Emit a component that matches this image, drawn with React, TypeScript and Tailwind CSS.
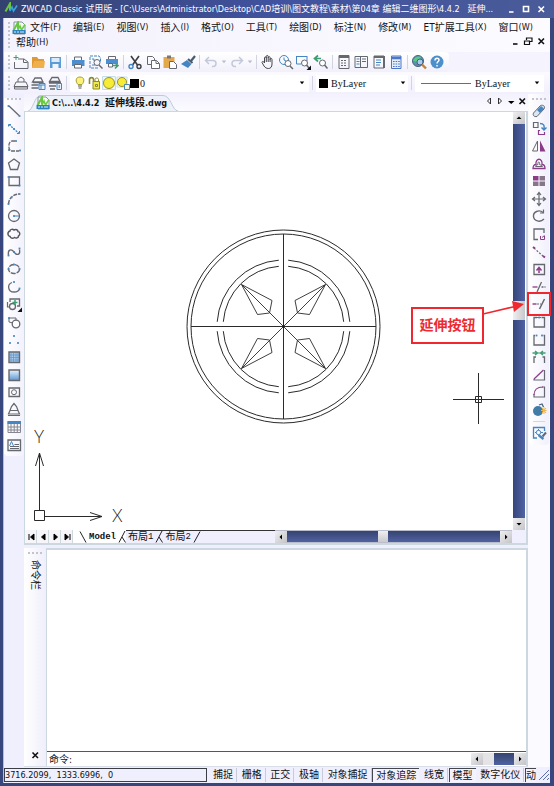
import type { ReactNode } from "react";

const G = "#66686f";
const B = "#4585c2";
const P = "#8c3b88";
const N = "#3f9d73";

const glyphs: Record<string, ReactNode> = {
  new: (<><path d="M5 5h6l4 3v6.500H1.500V8" stroke={G} /><path d="M10.500 5v3.500h4" stroke={G} /><path d="M3 1v5M.5 3.500h5" stroke={N} /></>),
  open: (<><path d="M2 3h5l1.500 2H14v9H2z" fill="#e09a35" stroke="none" /><path d="M4 7h11l-1 7H2z" fill="#f0b049" stroke="none" /></>),
  save: (<><path d="M3 3h11v11H3z" fill="#5d9bd8" stroke="none" /><path d="M4.500 4h8v4h-8z" fill="#dcebf8" stroke="none" /><path d="M5.500 10h6v4h-6z" fill="#eef5fc" stroke="none" /></>),
  print: (<><path d="M4.500 6V3h7v3" stroke={G} /><path d="M2 6h12.500v6H2z" fill="#4c8ed0" stroke="none" /><path d="M4.500 10.500h7v3.500h-7z" fill="#fff" stroke={G} /></>),
  preview: (<><path d="M11 14H3V2h9l1.500 2v4" stroke={B} strokeDasharray="3 1" /><path d="M5 5h2v2M5 11h3" stroke={B} /><circle cx="10" cy="8.500" r="3" stroke={G} /><path d="M12 11l3.500 3.500" stroke={G} strokeWidth="1.500" /></>),
  publish: (<><path d="M4.500 5V2.500h7V5" stroke={G} /><path d="M2 5h12v5H2z" fill="#4c8ed0" stroke="none" /><path d="M4.500 9.500h4V13h-4z" fill="#fff" stroke={G} /><path d="M8 11.500h6m-3-2.500 3 2.500-3 3" stroke={N} strokeWidth="1.600" /></>),
  cut: (<><path d="M4 2l6.500 9M12 2 5.500 11" stroke="#3c3d44" strokeWidth="1.600" /><circle cx="4" cy="12.500" r="2" stroke={B} strokeWidth="1.400" /><circle cx="12" cy="12.500" r="2" stroke="#3c3d44" strokeWidth="1.400" /></>),
  copy: (<><path d="M2.500 2.500h5l2 2v6h-7z" stroke={G} /><path d="M6.500 6.500h5l3 3v5h-8z" fill="#fff" stroke={G} /><path d="M11 6.500v3h3" stroke={G} /></>),
  paste: (<><path d="M1.500 3h11v11h-11z" fill="#e4a74a" stroke="none" /><path d="M5 1.500h4v3H5z" fill="#777" stroke="none" /><path d="M7.500 7.500h4l3 3v4h-7z" fill="#fff" stroke={G} /></>),
  brush: (<><path d="M15 2l-4 5" stroke="#475a70" strokeWidth="2.200" /><path d="M8 5l4.500 4" stroke="#475a70" strokeWidth="2" /><path d="M7 6l4.500 4L8 14 1 10z" fill={B} stroke="none" /></>),
  undo: (<path d="M6 3 2.500 6.500 6 10M2.500 6.500H10c4 0 4 6 0 6H9" stroke="#c3c9da" strokeWidth="1.500" />),
  redo: (<path d="M10 3l3.500 3.500L10 10m3.500-3.500H6c-4 0-4 6 0 6h1" stroke="#c3c9da" strokeWidth="1.500" />),
  pan: (<path d="M4.500 9V4c0-1.500 1.800-1.500 1.800 0V2.500c0-1.500 1.900-1.500 1.900 0V4c0-2 1.900-2 1.900 0v1.500c0-1.500 1.900-1.500 1.900 0V10c0 3-1.500 4.500-3.500 4.500S5 13.500 4 12L2 8.500C2 7 3.500 7 4.500 9zM6.300 4v4M8.200 4v4M10.100 5v3" stroke="#45474e" />),
  zoomRt: (<><circle cx="6" cy="6" r="4.500" stroke={B} /><path d="M6 3.500V6l2 1" stroke={B} /><circle cx="10" cy="9.500" r="3" fill="#fff" stroke={G} /><path d="M12 12l3 3" stroke={G} strokeWidth="1.500" /></>),
  zoomWin: (<><path d="M1 2.500h11M1.500 2v8H6M12 2v5" stroke={B} /><circle cx="9.500" cy="9" r="3" fill="#fff" stroke={G} /><path d="M11.500 11l2.500 3" stroke={G} strokeWidth="1.500" /><path d="M16 11.500V16h-4.500z" fill="#111" stroke="none" /></>),
  zoomPrev: (<><path d="M8 4.500H2m3-3-3.500 3 3.500 3" stroke={N} strokeWidth="1.700" /><circle cx="9.500" cy="9" r="3" fill="#fff" stroke={G} /><path d="M11.500 11l3 3.500" stroke={G} strokeWidth="1.500" /></>),
  props: (<><path d="M3 1.500h10v13H3z" stroke={G} /><path d="M3 3h10" stroke={G} strokeWidth="2" /><path d="M5 6.500h6M5 9h6M5 11.500h6" stroke={G} strokeDasharray="2 1" /></>),
  center: (<><path d="M2 2.500h12.500v11H2zM7.500 2v12" stroke={G} /><path d="M3.500 5h3M3.500 7.500h3M3.500 10h3" stroke={B} /><path d="M9 5h4M9 7.500h4" stroke={G} /></>),
  palette: (<><path d="M3 2h10v12H3z" stroke={G} /><path d="M3 3h10M13 2v12" stroke={G} strokeWidth="2" /><path d="M5 6h5M5 8.500h5M5 11h4" stroke={B} /></>),
  calc: (<><path d="M3.500 2h9.500v12.500H3.500z" fill="#e5eefb" stroke="#4d76c9" /><path d="M4 4h9" stroke="#4d76c9" strokeWidth="2.500" /><path d="M5 7.500h7M5 10h7M5 12.500h7" stroke="#4d76c9" strokeDasharray="1.600 1" /></>),
  render: (<><circle cx="7" cy="7" r="5.500" fill="#4f9aa8" stroke="#49617f" /><path d="M2 7c2-5 6-5 8-4L7 8z" fill="#5fc486" stroke="none" /><path d="M5 11l5-5 1 4z" fill="#c24a8d" stroke="none" /><circle cx="9" cy="8" r="3" fill="#a9cbe5" stroke="#39648f" /><path d="M11 10.500l4 4" stroke="#c1813b" strokeWidth="2.400" /></>),
  help: (<><circle cx="8" cy="8" r="6.500" fill="#4c8fcb" stroke="none" /><path d="M6 6.500c0-3 4-2.800 4-.5C10 7.500 8 7.500 8 9.500M8 11v1.500" stroke="#fff" strokeWidth="1.500" /></>),
  layer1: (<><path d="M5 7V4l3-2 3 2v3M3 7h10l2 4.500H1z" stroke={G} /><path d="M1.500 12h13v2h-13z" stroke={G} /></>),
  layer2: (<><path d="M5 3h6l2 4H2.500zM3 7.500h10M1.500 10h7M1.500 13h7" stroke={G} strokeWidth="1.300" /><path d="M9 8.500h6v6H9z" fill="#e8f2fc" stroke={B} /><path d="M9 10h6M11 10v4" stroke={B} /></>),
  layer3: (<><path d="M5 2.500h6l2 4H2.500zM2 8h12M2 11h7M3 14h5" stroke={G} strokeWidth="1.300" /><path d="M10 8.500h4.500v6H10z" fill="#e8f2fc" stroke={B} /><path d="M12.200 10v3" stroke={B} /></>),
  bulb: (<><path d="M8 2c-5 0-4.500 5-2 7.500h4C12.500 7 13 2 8 2z" fill="#fbf27a" stroke="#a69c3a" /><path d="M6 11h4M6.500 13h3" stroke="#555" /></>),
  lock: (<><path d="M3.500 9V4.500c0-2.500 4-2.500 4 0V7" stroke="#8c8a2c" strokeWidth="1.600" /><path d="M7 6.500h6.500V14H7z" fill="#f1e94b" stroke="#8c8a2c" /><path d="M9 6V4.500c0-2 3.500-2 3.500 0V6M9.500 9.500h2v2h-2z" stroke="#8c8a2c" /></>),
  sun: (<><path d="M1.500 1.500h13v13h-13z" stroke="#c7dce5" fill="#eef7f8" /><circle cx="8" cy="8" r="5.500" fill="#f7ec35" stroke="#98912c" /></>),
  sunVp: (<><path d="M2 2h10v10H2z" stroke="#c7dce5" /><circle cx="7" cy="7" r="4.500" fill="#f7ec35" stroke="#98912c" /><path d="M9.500 9.500h5v5h-5z" stroke={B} fill="#f6f7dc" /></>),
  line: (<><path d="M3 3l10 9.500" stroke={G} strokeWidth="1.300" /><Dot x={2.500} y={3} /><Dot x={13.500} y={13} /></>),
  xline: (<><path d="M3 3.500l10 9" stroke={B} strokeDasharray="2 1" strokeWidth="1.300" /><path d="M2.500 5.500V3.500H5M13.500 10v2.500H11" stroke={B} /><Dot x={8} y={8} /></>),
  pline: (<><path d="M9 3H6C2.500 3 1.500 11 5 13h8" stroke={G} strokeDasharray="4 1" strokeWidth="1.300" /><Dot x={10} y={3} /><Dot x={3} y={12} /><Dot x={14} y={12.500} /></>),
  polygon: (<path d="M8 3l5.500 4-2 6.500h-7L2.500 7z" stroke={G} strokeWidth="1.300" />),
  rect: (<><path d="M3 4h10.500v8.500H3z" stroke={G} strokeWidth="1.300" /><Dot x={2.500} y={4} /><Dot x={13.500} y={12.500} /></>),
  arc: (<><path d="M2.500 13C3 7 7 3.500 13 3" stroke={G} strokeWidth="1.400" strokeDasharray="4 1" /><Dot x={2.500} y={13} /><Dot x={5.500} y={6.500} /><Dot x={13.500} y={3} /></>),
  circle: (<><circle cx="8" cy="8" r="5.500" stroke={G} strokeWidth="1.300" /><path d="M8 8h5" stroke={B} /><Dot x={8} y={8} /></>),
  cloud: (<path d="M4 5c0-2 3-2 4-1 2-1 4 0 4 1.500 2 0 2.500 3.500.5 4.500 0 2-2.500 2.500-4 1.500-2 1.500-4 .5-4.500-1C1.500 10 1 6 4 5z" stroke="#55575e" strokeWidth="1.500" />),
  spline: (<><path d="M2.500 11C1.500 6 5 4 8 8s6.500 3 5.500-2.500" stroke={G} strokeWidth="1.300" /><Dot x={2.500} y={11.500} /><Dot x={8} y={8} /><Dot x={13.500} y={4.500} /></>),
  ellipse: (<><ellipse cx="8" cy="8" rx="5.500" ry="4.500" stroke={G} strokeDasharray="5 1" strokeWidth="1.300" /><Dot x={8} y={3.500} /><Dot x={2.500} y={8} /><Dot x={13.500} y={8} /></>),
  earc: (<><path d="M6 3.500C1 5 1.500 13 8 13c3 0 5-1.500 5.500-3" stroke={G} strokeWidth="1.300" /><Dot x={8} y={3} /><Dot x={13.500} y={9.500} /></>),
  insert: (<><path d="M4 6V3h9.500v7H11" stroke={G} strokeWidth="1.300" /><path d="M1.500 6v5h2" stroke={G} strokeWidth="1.200" /><circle cx="6.500" cy="10.500" r="3" stroke={G} strokeWidth="1.300" /><path d="M9 4v5M6.500 6.500h5" stroke={N} strokeWidth="1.500" /><path d="M16 11.500V16h-4.500z" fill="#111" stroke="none" /></>),
  block: (<><path d="M3 4h7v4M3 4v4l4 1" stroke={G} /><circle cx="10" cy="10" r="3.800" stroke={G} strokeWidth="1.300" fill="#fff" /><Dot x={3} y={4} /></>),
  point: (<><Dot x={8} y={4} /><Dot x={4} y={11} /><Dot x={12} y={11} /></>),
  hatch: (<><path d="M3 3h10.500v10.500H3z" fill="#a9caea" stroke={G} strokeWidth="1.400" /><path d="M5 4v9M7.500 4v9M10 4v9M12 4v9M4 6h9M4 8.500h9M4 11h9" stroke="#5f92c9" strokeWidth=".7" /></>),
  gradient: (<><defs><linearGradient id="cadFill" x2="0" y2="1"><stop stopColor="#e6f2fc" /><stop offset="1" stopColor="#5c97d2" /></linearGradient></defs><path d="M3 3h10.500v10.500H3z" fill="url(#cadFill)" stroke={G} strokeWidth="1.400" /></>),
  region: (<><path d="M3 4h10.500v8.500H3z" stroke={G} strokeWidth="1.300" /><circle cx="8" cy="8.200" r="2.500" stroke={G} /></>),
  wipeout: (<path d="M8 1.500 5.500 4.500 4 8.500h8l-1.500-4zM4 8.500 2.500 12h11L12 8.500M2 13.500h12" stroke={G} strokeWidth="1.200" />),
  table: (<><path d="M2 2.500h12.500v11H2zM5 5v9M8.200 5v9M11.300 5v9M2 8h12M2 11h12" stroke="#85868f" /><path d="M1.500 2h13.500v3H1.500z" fill={B} stroke="none" /></>),
  mtext: (<><path d="M2 3h12.500v10.500H2z" stroke={G} strokeWidth="1.300" /><path d="M3.500 9l2-4.500 2 4.500" stroke={B} /><path d="M8.500 7.500h4.500M4 9.500h9M4 11.500h9" stroke={G} /></>),
  erase: (<><path d="M2.500 10l7-7.500c3-1 5 1 3.500 3.500l-7 7.500c-3 .5-4.500-1-3.500-3.500z" fill="#d9e6f3" stroke={G} /><path d="M6 7l4-4 3 2.500-4 4.500z" fill={B} stroke="none" /></>),
  copyObj: (<><path d="M2.500 1.500h4.500v5H2.500z" stroke={G} strokeWidth="1.200" /><path d="M9 2.500c4 0 4.500 2 4 6m-2.500-2L13 9l2.500-2.500" stroke={B} strokeWidth="1.500" /><path d="M9 9.500H7.500v4h6V11" stroke={P} strokeWidth="1.200" /></>),
  mirror: (<><path d="M6.500 3v10H1.500z" stroke={G} /><path d="M9 2.500V13.500h5.500z" fill={P} stroke="none" /></>),
  offset: (<><path d="M2 12.500h12c0-3-1-4-3-4 1-7-7-7-6 0-2 0-3 1.500-3 4z" stroke={P} strokeWidth="1.300" /><path d="M4.500 10.500h7C11 9 9 9 8.500 8.500c.5-3.500-2-3.500-1.500 0C5.500 9 4.500 9.500 4.500 10.500z" stroke={G} /></>),
  array: (<><path d="M2 3h5.500v4.500H2z" fill={P} stroke="none" /><path d="M8.500 3H14v4.500H8.500zM2 8.500h5.500V13H2zM8.500 8.500H14V13H8.500z" fill="#877689" stroke="none" /></>),
  move: (<path d="M8 2v12M2 8h12M6 4l2-2.500L10 4M6 12l2 2.500L10 12M4 6 1.500 8 4 10M12 6l2.500 2-2.500 2" stroke={G} strokeWidth="1.200" />),
  rotate: (<><path d="M12 4.500C8 1 2 4 2.500 8.500S9 15 13 11" stroke={G} strokeWidth="1.400" /><path d="M12.500 1.500v3.500H9" stroke={G} strokeWidth="1.200" /></>),
  scale: (<><path d="M13 7V3H3v10.500h4" stroke={G} strokeWidth="1.300" /><path d="M9.500 13.500V10M9.500 13.500h4V10M11 11.500l2.500-2" stroke={P} /></>),
  stretch: (<><path d="M3 4l10 9" stroke={G} strokeDasharray="2 1.500" strokeWidth="1.200" /><path d="M2 3l2 1.500M12 12l2 1.500" stroke={P} strokeWidth="2" /></>),
  lengthen: (<><path d="M3 13.500V3.500h10.500v10z" stroke={G} strokeWidth="1.300" /><path d="M8 12V7m-2.500 2.500L8 6.500l2.500 3" stroke={P} strokeWidth="1.500" /></>),
  trim: (<><path d="M1.500 8h5" stroke={P} strokeWidth="1.300" /><path d="M6 13l4.500-10" stroke={G} strokeWidth="1.300" /><path d="M10.500 8h4" stroke={G} strokeWidth="1.300" strokeDasharray="2 1" /></>),
  extend: (<><path d="M1.500 8h4" stroke={P} strokeWidth="1.400" /><path d="M6 8h4" stroke={G} strokeDasharray="2 1" /><path d="M8.500 13l5-10" stroke={G} strokeWidth="1.500" /></>),
  breakPt: (<><path d="M6 3.500H3V13h10.500V3.500h-3" stroke={G} strokeWidth="1.300" /><path d="M6 3.500h4" stroke={G} /><Dot x={8.200} y={3.500} /></>),
  breakObj: (<><path d="M4 3.500H3V13h10.500V3.500h-1" stroke={G} strokeWidth="1.300" /><Dot x={5.500} y={3.500} /><Dot x={11} y={3.500} /></>),
  join: (<><path d="M3 14V8h2M13.500 14V8h-2" stroke={G} strokeWidth="1.300" /><path d="M1.500 4h4m3 0h-1M9.500 4h5M4 2l2.500 2L4 6M12 2 9.500 4 12 6" stroke={N} strokeWidth="1.400" /></>),
  chamfer: (<><path d="M13.500 3v10H3v-1" stroke={G} strokeWidth="1.200" /><path d="M3 12l9.500-9" stroke={P} strokeWidth="1.200" /></>),
  fillet: (<><path d="M3 10v3h10.500V3H11" stroke={G} strokeWidth="1.200" /><path d="M3 11c0-5 3-8 9-8" stroke={P} strokeWidth="1.200" /></>),
  explode: (<><circle cx="7" cy="9" r="5" fill="#417ba8" stroke="none" /><path d="M8 3l3-1 1.500 3" stroke="#47627c" strokeWidth="1.300" /><path d="M13 5v7M10 8.500h5.500M11 6l4 5M15 6l-4 5" stroke="#efb648" /></>),
  express: (<><path d="M13.500 6V2.500H2.500V13H6" stroke={B} strokeWidth="1.300" /><path d="M7.500 4v7M4 7.500h8" stroke={B} /><circle cx="7.500" cy="7.500" r="2.200" stroke={B} fill="#fff" /><path d="M15 7.500l-3.500 4" stroke={G} strokeWidth="2" /><path d="M8 10.500l4.500 3.500" stroke={B} strokeWidth="2.400" /></>),
};

function Dot({ x, y }: { x: number; y: number }) {
  return <rect x={x - 0.9} y={y - 0.9} width="1.800" height="1.800" fill={B} stroke="none" />;
}

function Glyph({ name }: { name: string }) {
  return (
    <svg viewBox="0 0 16 16" className="block size-4 shrink-0" fill="none" aria-hidden="true">
      {glyphs[name]}
    </svg>
  );
}

function Tool({ name }: { name: string }) {
  return (
    <button type="button" aria-label={name} className="block size-4 shrink-0">
      <Glyph name={name} />
    </button>
  );
}

function Caret({ className = "text-black" }: { className?: string }) {
  return (
    <svg viewBox="0 0 6 4" className={"block h-1 w-1.5 shrink-0 " + className} aria-hidden="true">
      <path d="M.8.5h4.400L3 3.200z" fill="currentColor" />
    </svg>
  );
}

const Grip = () => <span className="mr-[3px] h-3.5 w-0.5 shrink-0 border-l-2 border-dotted border-[#c3c4d0]" />;
const GripH = () => <span className="h-0.5 w-3.5 shrink-0 border-t-2 border-dotted border-[#c3c4d0]" />;
const Sep = () => <span className="mx-[3px] h-3.5 w-px shrink-0 bg-[#d3d4e2]" />;

function Logo({ paper = false }: { paper?: boolean }) {
  return (
    <svg viewBox="0 0 14 14" className="block size-3.5 shrink-0" fill="none" aria-hidden="true">
      {paper && <path d="M2 1h8l3 3v9H2z" fill="#f4faf6" stroke="#8494a0" />}
      <path d="M1.500 9.500 6 1.500v7" stroke="#69c63e" strokeWidth="2" />
      <path d="M6 9l2-4 1.500 4L13 3.500" stroke={paper ? "#6ccb44" : "#37a4e0"} strokeWidth="1.600" />
      {paper && <path d="M.5 9h13v4H.5z" fill="#2c82c0" />}
      {paper && <path d="M2 11h2m1 0h2m1 0h4" stroke="#d9ecf8" />}
    </svg>
  );
}

type Mark = "min" | "max" | "restore" | "close";
function WinButton({ mark }: { mark: Mark }) {
  return (
    <button type="button" aria-label={mark} className="block size-2.5">
      <svg viewBox="0 0 10 10" className="block size-2.5" fill="none" stroke="currentColor" strokeWidth="1.600" aria-hidden="true">
        {mark === "min" && <path d="M3 8h4.500" />}
        {mark === "max" && <path d="M2.500 2.500h5v5h-5z" />}
        {mark === "restore" && <path d="M3.500 4V2H9v3.500H7M1.500 5h5v3.500h-5z" strokeWidth="1.200" />}
        {mark === "close" && <path d="M2.500 2.500l5.500 5.500m0-5.500L2.500 8" />}
      </svg>
    </button>
  );
}

const menus = [
  ["文件", "F"], ["编辑", "E"], ["视图", "V"], ["插入", "I"], ["格式", "O"], ["工具", "T"],
  ["绘图", "D"], ["标注", "N"], ["修改", "M"], ["ET扩展工具", "X"], ["窗口", "W"], ["帮助", "H"],
];

const drawTools = ["line", "xline", "pline", "polygon", "rect", "arc", "circle", "cloud", "spline", "ellipse", "earc", "insert", "block", "point", "hatch", "gradient", "region", "wipeout", "table", "mtext"];
const editTools = ["erase", "copyObj", "mirror", "offset", "array", "move", "rotate", "scale", "stretch", "lengthen", "trim", "extend", "breakPt", "breakObj", "join", "chamfer", "fillet", "explode"];

function Group({ items, width }: { items: string[]; width: string }) {
  return (
    <div className={"flex shrink-0 justify-between " + width}>
      {items.map((n) => <Tool key={n} name={n} />)}
    </div>
  );
}

type Dir = "up" | "down" | "left" | "right";
const arrows: Record<Dir, string> = {
  up: "M3.500 7h5L6 4.500z",
  down: "M3.500 5h5L6 7.500z",
  left: "M7 3.500v5L4.500 6z",
  right: "M5 3.500v5L7.500 6z",
};
function ScrollButton({ dir }: { dir: Dir }) {
  return (
    <button type="button" aria-label={"scroll " + dir} className="block size-3 shrink-0 bg-linear-to-br from-[#efeff1] to-[#c4c4c8]">
      <svg viewBox="0 0 12 12" className="block size-3" aria-hidden="true"><path d={arrows[dir]} /></svg>
    </button>
  );
}

function Wheel() {
  const dirs = [[1, 1], [1, -1], [-1, 1], [-1, -1]];
  return (
    <g transform="translate(283.5 326.5)">
      <circle r="96.500" />
      <circle r="92.500" />
      <path d="M0-92.500v185M-92.500 0h185" />
      {dirs.map(([x, y]) => (
        <g key={x + "," + y} transform={`scale(${x} ${y})`}>
          <path d="M4.700-66.300A66.500 66.500 0 0 1 66.300-4.700M4.700-60.200A60.300 60.300 0 0 1 60.200-4.700" />
          <path d="M0 0 42-42 11.500-26 14-13.500 26-12 42-42" strokeWidth=".9" />
        </g>
      ))}
      <circle r="1" fill="#111" />
    </g>
  );
}

function Drawing() {
  return (
    <svg viewBox="25 112 487 418" preserveAspectRatio="xMinYMin meet" className="absolute inset-0 size-full" fill="none" stroke="#2a2a2a" aria-label="drawing">
      <Wheel />
      <path d="M453 399.500h51M478.500 373v51" />
      <path d="M475.500 396.500h6v6h-6z" />
      <path d="M34.500 510.500h10v10h-10zM39.500 510v-57M35.500 466l4-13 4 13M45 516.500h57M90 512.500l12 4-12 4" />
      <g fill="#222" stroke="none" className="font-['Lato'] text-[17px] font-light">
        <text x="34" y="443">Y</text>
        <text x="112" y="522">X</text>
      </g>
    </svg>
  );
}

function SheetTab({ label, digit, active = false }: { label: string; digit?: string; active?: boolean }) {
  return (
    <button type="button" className={"flex h-3 items-center px-0.5 leading-3 " + (active ? "font-['Liberation_Mono'] text-[9px] font-bold" : "text-[10px]")}>
      {label}
      {digit && <span className="font-['Liberation_Mono'] text-[9px]">{digit}</span>}
    </button>
  );
}

function Slash({ kind }: { kind: "open" | "cross" | "end" }) {
  return (
    <svg viewBox="0 0 8 12" className="block h-3 w-2 shrink-0" fill="none" stroke="#222" aria-hidden="true">
      {kind === "open" && <path d="M1 .5 7 11.500" />}
      {kind === "cross" && <path d="M7 0 1 11.500M4 6l3.500 5.500" />}
      {kind === "end" && <path d="M7 .5 1 11.500" />}
    </svg>
  );
}

function StatusToggle({ label, on = false, tight = false }: { label: string; on?: boolean; tight?: boolean }) {
  return (
    <button
      type="button"
      aria-pressed={on}
      className={"h-3.5 shrink-0 border-l text-[10px] whitespace-nowrap " + (tight ? "" : "px-[3px] ") + (on ? "border-t border-[#44464e] bg-[#f4f3fd] leading-3" : "border-r border-l-transparent border-r-[#c9cad9] leading-[14px]")}
    >
      {label}
    </button>
  );
}

const trackH = "bg-linear-to-b from-[#35436f] to-[#5062a3]";
const trackV = "bg-linear-to-r from-[#37467a] to-[#5063a4]";

export default function App() {
  return (
    <div className="flex h-screen min-h-[640px] flex-col overflow-hidden bg-[#37467c] pr-1 pb-[3px] pl-[3px] font-['DejaVu_Sans_Condensed','Noto_Sans_CJK_SC',sans-serif] text-[10px] text-[#111]">
      <header className="-mr-1 -ml-[3px] flex h-[18px] shrink-0 items-center bg-linear-to-r from-[#34426f] via-[#4152a0] to-[#4a5b98] pr-2 pl-1 text-white">
        <Logo />
        <h1 className="ml-[3px] min-w-0 flex-1 overflow-hidden text-[9px] leading-[18px] font-normal whitespace-pre">
          {"ZWCAD Classic 试用版 - [C:\\Users\\Administrator\\Desktop\\CAD培训\\图文教程\\素材\\第04章 编辑二维图形\\4.4.2   延伸..."}
        </h1>
        <div className="flex shrink-0 gap-[5px] pl-1"><WinButton mark="min" /><WinButton mark="max" /><WinButton mark="close" /></div>
      </header>

      <div className="flex min-h-0 flex-1 flex-col border-l border-[#b8bcda] bg-[#f0effd]">
        <nav className="relative flex h-[34px] shrink-0 items-start bg-linear-to-r from-[#f3f2fd] to-[#fcfbff] pt-0.5 pl-1">
          <span className="mt-0.5 h-[26px] w-0.5 shrink-0 border-l-2 border-dotted border-[#c3c4d0]" />
          <ul className="flex flex-1 flex-wrap gap-x-3 pl-1.5">
            {menus.map(([name, key], i) => (
              <li key={key} className="h-[15px]">
                <button type="button" className="flex h-[15px] items-center whitespace-nowrap">
                  {i === 0 && <span className="-ml-1 pr-1"><Logo paper /></span>}
                  {name}
                  <span className="text-[9px]">({key})</span>
                </button>
              </li>
            ))}
          </ul>
          <div className="absolute right-1 bottom-1.5 flex gap-[3px]"><WinButton mark="min" /><WinButton mark="restore" /><WinButton mark="close" /></div>
        </nav>

        <div className="flex h-5 shrink-0 bg-[#f4f3fe]">
          <div className="flex items-center rounded-r bg-linear-to-b from-white to-[#f1f0fb] pr-1 pl-1">
            <Grip />
            <Group width="w-[50px]" items={["new", "open", "save"]} />
            <Sep />
            <Group width="w-[50px]" items={["print", "preview", "publish"]} />
            <Sep />
            <Group width="w-[69px]" items={["cut", "copy", "paste", "brush"]} />
            <Sep />
            <div className="flex w-[50px] shrink-0 items-center justify-between text-[#b7bccb]">
              <Tool name="undo" /><Caret className="text-[#b7bccb]" /><Tool name="redo" /><Caret className="text-[#b7bccb]" />
            </div>
            <Sep />
            <Group width="w-[69px]" items={["pan", "zoomRt", "zoomWin", "zoomPrev"]} />
            <Sep />
            <Group width="w-[68px]" items={["props", "center", "palette", "calc"]} />
            <Sep />
            <Group width="w-[34px]" items={["render", "help"]} />
          </div>
        </div>

        <div className="flex h-[22px] shrink-0 items-center bg-linear-to-b from-[#fbfbff] to-[#f1f0fc] pl-1">
          <Grip />
          <Group width="w-[50px]" items={["layer1", "layer2", "layer3"]} />
          <Sep />
          <div className="flex h-[17px] min-w-0 flex-1 items-center bg-white pr-1 pl-0.5">
            <div className="flex w-[55px] shrink-0 justify-between">
              <Glyph name="bulb" /><span className="-ml-1"><Glyph name="lock" /></span><span className="-ml-1"><Glyph name="sun" /></span><span className="-mr-1 -ml-1"><Glyph name="sunVp" /></span>
            </div>
            <span className="mr-px ml-[3px] size-[9px] shrink-0 bg-black" />
            <select aria-label="Layer" className="h-4 min-w-0 flex-1 appearance-none bg-transparent font-['Liberation_Serif',serif] text-[10px]"><option>0</option></select>
            <Caret />
          </div>
          <Sep />
          <div className="flex h-[17px] w-[92px] shrink-0 items-center bg-white pr-0.5 pl-[3px]">
            <span className="mr-[3px] size-[9px] shrink-0 bg-black" />
            <select aria-label="Color" className="h-4 min-w-0 flex-1 appearance-none bg-transparent font-['Liberation_Serif',serif] text-[10px]"><option>ByLayer</option></select>
            <Caret />
          </div>
          <Sep />
          <div className="mr-1.5 flex h-[17px] w-[129px] shrink-0 items-center bg-white pr-1 pl-1.5">
            <span className="mr-1 h-px w-[50px] shrink-0 bg-[#7a666c]" />
            <select aria-label="Linetype" className="h-4 min-w-0 flex-1 appearance-none bg-transparent font-['Liberation_Serif',serif] text-[10px]"><option>ByLayer</option></select>
            <Caret />
          </div>
        </div>

        <div className="relative flex min-h-0 flex-1">
          <aside className="w-5 shrink-0 pt-1">
            <div className="flex h-[358px] flex-col items-center rounded-b bg-linear-to-r from-white to-[#f3f2fd]">
              <GripH />
              <div className="mt-[3px] flex h-[350px] flex-col justify-between">
                {drawTools.map((n) => <Tool key={n} name={n} />)}
              </div>
            </div>
          </aside>

          <main className="flex min-w-0 flex-1 flex-col">
            <div className="flex h-[17px] shrink-0 items-center justify-between bg-linear-to-b from-[#f3f2fd] to-[#fbfbff]">
              <div className="relative ml-1 h-[17px] w-[150px]">
                <svg viewBox="0 0 150 17" className="absolute inset-0 size-full" aria-hidden="true">
                  <path d="M0 17C5 16.500 6 3 12 1.500h123c8 0 9 15 15 15.500" fill="#edf1fa" stroke="#becbd7" />
                </svg>
                <button type="button" className="relative flex h-[18px] items-center pl-2 text-[9px] font-bold whitespace-pre">
                  <Logo paper />
                  <span className="pl-0.5">C:\...\4.4.2  <span className="text-[10px]">延伸线段</span>.dwg</span>
                </button>
              </div>
              <div className="flex items-center gap-px pr-px pb-1">
                <button type="button" aria-label="previous tab"><svg viewBox="0 0 10 10" className="block size-2.5" fill="none" stroke="#333"><path d="M6.500 2v6L3.500 5z" /></svg></button>
                <button type="button" aria-label="next tab"><svg viewBox="0 0 10 10" className="block size-2.5" fill="none" stroke="#333"><path d="M3.500 2v6l3-3z" /></svg></button>
                <button type="button" aria-label="tab list"><svg viewBox="0 0 10 10" className="block size-2.5"><path d="M2 5h6.500L5.200 8z" /></svg></button>
                <WinButton mark="close" />
              </div>
            </div>

            <section className="flex min-h-0 flex-1 flex-col border border-r-2 border-b-2 border-[#ccd7df] bg-[#f0effd]">
              <div className="flex min-h-0 flex-1">
                <div className="relative min-w-0 flex-1 overflow-hidden bg-white"><Drawing /></div>
                <div className="flex w-3 shrink-0 flex-col">
                  <ScrollButton dir="up" />
                  <div className={"flex-[176_1_0%] " + trackV} />
                  <div className="h-[19px] bg-linear-to-r from-[#efeff1] to-[#c8c8cc]" />
                  <div className={"flex-[197_1_0%] " + trackV} />
                  <ScrollButton dir="down" />
                </div>
                <span className="w-px shrink-0 bg-white" />
              </div>
              <div className="flex h-[13px] shrink-0 pr-3.5">
                <div className="flex flex-[251_1_0%] bg-white">
                  <div className="flex shrink-0">
                    {["M4 3v6M9 3v6L5.500 6z", "M8 3v6L4.500 6z", "M5 3v6l3.500-3z", "M4 3v6l3.500-3zM9 3v6"].map((d) => (
                      <button key={d} type="button" aria-label="sheet navigation" className="h-[13px] w-3 border-r border-[#cfd8dc] bg-[#f6f6fa]">
                        <svg viewBox="0 0 12 12" className="block size-3" stroke="#000"><path d={d} /></svg>
                      </button>
                    ))}
                  </div>
                  <div className="flex min-w-0 flex-1 border-t border-[#333] bg-[#f0effd]">
                    <div className="-mt-px flex bg-white pt-px pl-1.5">
                      <Slash kind="open" />
                      <SheetTab label="Model" active />
                      <Slash kind="cross" />
                    </div>
                    <SheetTab label="布局" digit="1" /><Slash kind="cross" />
                    <SheetTab label="布局" digit="2" /><Slash kind="end" />
                  </div>
                </div>
                <div className="flex flex-[237_1_0%] border-y border-[#b9bdcc]">
                  <ScrollButton dir="left" />
                  <div className={"flex-[91_1_0%] " + trackH} />
                  <div className="w-2.5 bg-linear-to-b from-[#f0f0f2] to-[#cacace]" />
                  <div className={"flex-[112_1_0%] " + trackH} />
                  <ScrollButton dir="right" />
                </div>
              </div>
            </section>

            <section className="mt-[3px] flex h-[219px] shrink-0 border-b border-[#d9dde8]">
              <div className="flex w-[22px] shrink-0 flex-col items-center bg-linear-to-r from-white to-[#efeefb] pt-1 pb-1.5">
                <GripH />
                <h2 className="mt-1.5 flex-1 text-[10px] font-normal [text-orientation:sideways] [writing-mode:vertical-rl]">命令栏</h2>
                <WinButton mark="close" />
              </div>
              <div className="flex min-w-0 flex-1 flex-col border-t-2 border-r-2 border-l border-[#ccd7df] bg-white">
                <div className="flex-1" />
                <div className="flex h-[15px] shrink-0 items-center border-t border-[#55575f]">
                  <label className="flex min-w-0 flex-1 items-center pl-0.5 text-[10px]">
                    命令:
                    <input type="text" className="h-3 min-w-0 flex-1 pl-1 outline-none" />
                  </label>
                  <div className="flex">
                    <ScrollButton dir="left" />
                    <span className="h-3 w-[11px] bg-[#e4e4e7]" />
                    <span className={"h-3 w-5 " + trackH} />
                    <ScrollButton dir="right" />
                  </div>
                </div>
              </div>
            </section>
          </main>

          <aside className="flex w-[22px] shrink-0 flex-col items-center bg-[#fbfaff]">
            <div className="flex flex-col items-center rounded-b bg-linear-to-r from-white to-[#f1f0fc] px-0.5 pt-1 pb-1">
              <GripH />
              <div className="mt-[3px] flex h-[315px] flex-col justify-between">
                {editTools.map((n) =>
                  n === "extend" ? (
                    <span key={n} className="relative block">
                      <Tool name={n} />
                      <span className="absolute -inset-1 border-2 border-[#f0272f]" />
                    </span>
                  ) : (
                    <Tool key={n} name={n} />
                  ),
                )}
              </div>
              <span className="my-[3px] h-px w-3 bg-[#d6d6e2]" />
              <Tool name="express" />
            </div>
          </aside>

          <svg viewBox="0 0 42 16" className="pointer-events-none absolute top-[206px] right-[25px] h-4 w-[42px]" aria-hidden="true">
            <path d="M0 14 32 6.500" stroke="#f0272f" strokeWidth="1.600" />
            <path d="M29 1l12 3-10 8z" fill="#f0272f" />
          </svg>
          <div className="absolute top-[213px] right-[66px] flex h-[37px] w-[73px] items-center justify-center border-2 border-[#f0272f] bg-white text-[14px] font-bold text-[#ec2b31]">
            延伸按钮
          </div>
        </div>

        <footer className="flex h-4 shrink-0 items-center gap-0.5 bg-[#f0effd]">
          <output className="h-3.5 w-[203px] shrink-0 border border-[#3c3e46] text-[9px] leading-3 whitespace-pre">3716.2099,  1333.6996,  0</output>
          <div className="flex min-w-0 flex-1 justify-between">
            <StatusToggle label="捕捉" />
            <StatusToggle label="栅格" />
            <StatusToggle label="正交" />
            <StatusToggle label="极轴" />
            <StatusToggle label="对象捕捉" />
            <StatusToggle label="对象追踪" on />
            <StatusToggle label="线宽" />
            <StatusToggle label="模型" on />
            <StatusToggle label="数字化仪" />
            <StatusToggle label="动" on tight />
          </div>
          <svg viewBox="0 0 12 12" className="block size-3 shrink-0" stroke="#5a6eaf" aria-hidden="true"><path d="M1 11 11 1M5 11l6-6M9 11l2-2" /></svg>
        </footer>
      </div>
    </div>
  );
}
